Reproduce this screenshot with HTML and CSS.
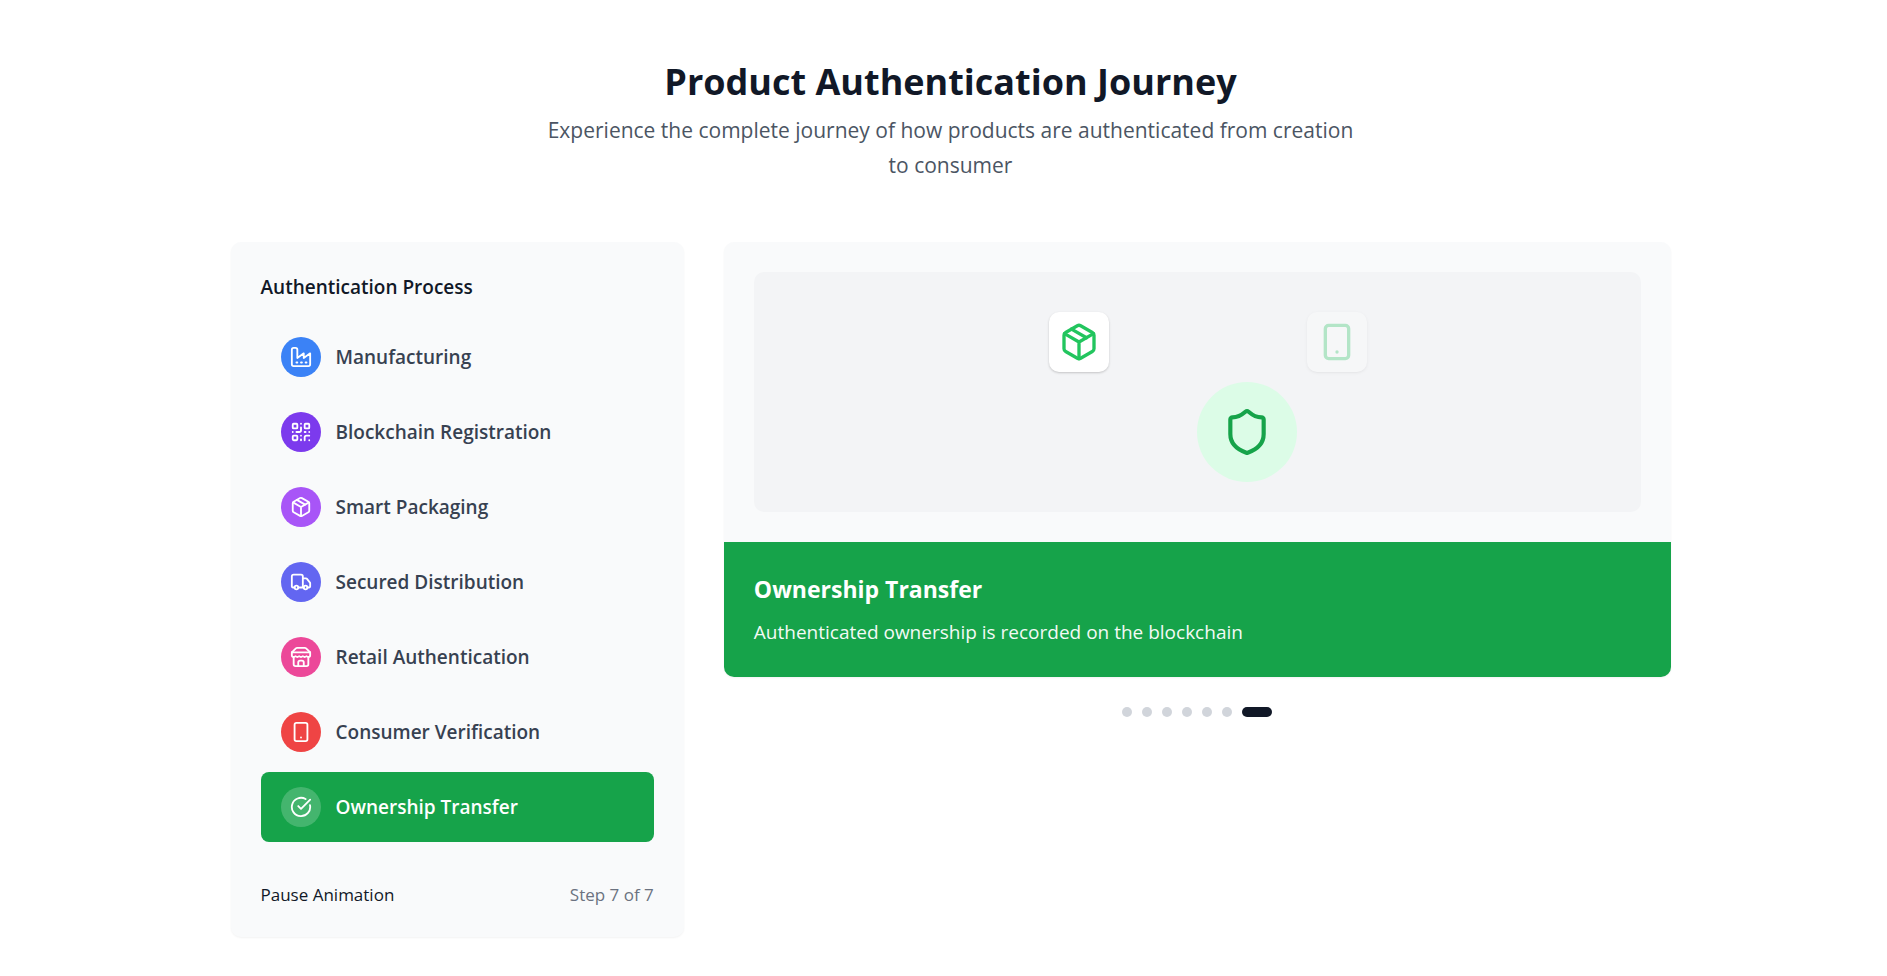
FILE: index.html
```
<!DOCTYPE html>
<html lang="en">
<head>
<meta charset="utf-8">
<title>Product Authentication Journey</title>
<link rel="stylesheet" href="styles.css">
</head>
<body>
<svg class="sprite" aria-hidden="true">
  <symbol id="factory" viewBox="0 0 24 24"><path d="M2 20a2 2 0 0 0 2 2h16a2 2 0 0 0 2-2V8l-7 5V8l-7 5V4a2 2 0 0 0-2-2H4a2 2 0 0 0-2 2Z"/><path d="M17 18h1M12 18h1M7 18h1"/></symbol>
  <symbol id="qr" viewBox="0 0 24 24"><rect width="5" height="5" x="3" y="3" rx="1"/><rect width="5" height="5" x="16" y="3" rx="1"/><rect width="5" height="5" x="3" y="16" rx="1"/><path d="M21 16h-3a2 2 0 0 0-2 2v3M21 21v.01M12 7v3a2 2 0 0 1-2 2H7M3 12h.01M12 3h.01M12 16v.01M16 12h1M21 12v.01M12 21v-1"/></symbol>
  <symbol id="package" viewBox="0 0 24 24"><path d="m7.5 4.27 9 5.15"/><path d="M21 8a2 2 0 0 0-1-1.73l-7-4a2 2 0 0 0-2 0l-7 4A2 2 0 0 0 3 8v8a2 2 0 0 0 1 1.73l7 4a2 2 0 0 0 2 0l7-4A2 2 0 0 0 21 16Z"/><path d="m3.3 7 8.7 5 8.7-5M12 22V12"/></symbol>
  <symbol id="truck" viewBox="0 0 24 24"><path d="M14 18V6a2 2 0 0 0-2-2H4a2 2 0 0 0-2 2v11a1 1 0 0 0 1 1h2M15 18H9M19 18h2a1 1 0 0 0 1-1v-3.65a1 1 0 0 0-.22-.624l-3.48-4.35A1 1 0 0 0 17.52 8H14"/><circle cx="17" cy="18" r="2"/><circle cx="7" cy="18" r="2"/></symbol>
  <symbol id="store" viewBox="0 0 24 24"><path d="m2 7 4.41-4.41A2 2 0 0 1 7.83 2h8.34a2 2 0 0 1 1.42.59L22 7M4 12v8a2 2 0 0 0 2 2h12a2 2 0 0 0 2-2v-8"/><path d="M15 22v-4a2 2 0 0 0-2-2h-2a2 2 0 0 0-2 2v4M2 7h20"/><path d="M22 7v3a2 2 0 0 1-2 2a2.7 2.7 0 0 1-1.59-.63.7.7 0 0 0-.82 0A2.7 2.7 0 0 1 16 12a2.7 2.7 0 0 1-1.59-.63.7.7 0 0 0-.82 0A2.7 2.7 0 0 1 12 12a2.7 2.7 0 0 1-1.59-.63.7.7 0 0 0-.82 0A2.7 2.7 0 0 1 8 12a2.7 2.7 0 0 1-1.59-.63.7.7 0 0 0-.82 0A2.7 2.7 0 0 1 4 12a2 2 0 0 1-2-2V7"/></symbol>
  <symbol id="phone" viewBox="0 0 24 24"><rect width="14" height="20" x="5" y="2" rx="2"/><path d="M12 18h.01"/></symbol>
  <symbol id="check" viewBox="0 0 24 24"><path d="M21.801 10A10 10 0 1 1 17 3.335"/><path d="m9 11 3 3L22 4"/></symbol>
  <symbol id="shield" viewBox="0 0 24 24"><path d="M20 13c0 5-3.5 7.5-7.66 8.95a1 1 0 0 1-.67-.01C7.5 20.5 4 18 4 13V6a1 1 0 0 1 1-1c2 0 4.5-1.2 6.24-2.72a1.17 1.17 0 0 1 1.52 0C14.51 3.81 17 5 19 5a1 1 0 0 1 1 1z"/></symbol>
</svg>

<main class="journey">
  <header class="intro">
    <h1 class="intro-title">Product Authentication Journey</h1>
    <p class="intro-text">Experience the complete journey of how products are authenticated from creation to consumer</p>
  </header>

  <div class="columns">
    <section class="process">
      <h2 class="process-title">Authentication Process</h2>
      <div class="steps">
        <button type="button" class="step"><span class="badge blue"><svg class="icon"><use href="#factory"/></svg></span>Manufacturing</button>
        <button type="button" class="step"><span class="badge violet"><svg class="icon"><use href="#qr"/></svg></span>Blockchain Registration</button>
        <button type="button" class="step"><span class="badge purple"><svg class="icon"><use href="#package"/></svg></span>Smart Packaging</button>
        <button type="button" class="step"><span class="badge indigo"><svg class="icon"><use href="#truck"/></svg></span>Secured Distribution</button>
        <button type="button" class="step"><span class="badge pink"><svg class="icon"><use href="#store"/></svg></span>Retail Authentication</button>
        <button type="button" class="step"><span class="badge red"><svg class="icon"><use href="#phone"/></svg></span>Consumer Verification</button>
        <button type="button" class="step active" aria-current="step"><span class="badge"><svg class="icon"><use href="#check"/></svg></span>Ownership Transfer</button>
      </div>
      <div class="controls">
        <button type="button" class="pause">Pause Animation</button>
        <span class="count">Step 7 of 7</span>
      </div>
    </section>

    <div class="preview">
      <section class="scene">
        <div class="scene-top">
          <div class="stage">
            <div class="tile tile-package"><svg class="icon"><use href="#package"/></svg></div>
            <div class="tile tile-phone"><svg class="icon"><use href="#phone"/></svg></div>
            <div class="seal"><svg class="icon"><use href="#shield"/></svg></div>
          </div>
        </div>
        <div class="caption">
          <h3 class="caption-title">Ownership Transfer</h3>
          <p class="caption-text">Authenticated ownership is recorded on the blockchain</p>
        </div>
      </section>
      <nav class="dots" aria-label="Steps">
        <button type="button" class="dot" aria-label="Step 1"></button>
        <button type="button" class="dot" aria-label="Step 2"></button>
        <button type="button" class="dot" aria-label="Step 3"></button>
        <button type="button" class="dot" aria-label="Step 4"></button>
        <button type="button" class="dot" aria-label="Step 5"></button>
        <button type="button" class="dot" aria-label="Step 6"></button>
        <button type="button" class="dot current" aria-label="Step 7"></button>
      </nav>
    </div>
  </div>
</main>
</body>
</html>
```
FILE: styles.css
```
*, *::before, *::after { box-sizing: border-box; }

body {
  margin: 0;
  background: #fff;
  color: #111827;
  font-family: "Segoe UI", "Open Sans", "Noto Sans", sans-serif;
}

h1, h2, h3, p { margin: 0; }

button {
  border: 0;
  padding: 0;
  background: none;
  color: inherit;
  font: inherit;
  cursor: pointer;
}

.sprite { position: absolute; width: 0; height: 0; }

.icon {
  display: block;
  width: 22px;
  height: 22px;
  fill: none;
  stroke: currentColor;
  stroke-width: 2;
  stroke-linecap: round;
  stroke-linejoin: round;
}

.journey { padding: 59px 0 40px 14px; }

.intro {
  display: flex;
  flex-direction: column;
  align-items: center;
  gap: 9px;
  margin-bottom: 59px;
  text-align: center;
}

.intro-title { font-size: 36px; line-height: 45px; font-weight: 700; }

.intro-text {
  max-width: 820px;
  color: #4b5563;
  font-size: 21px;
  line-height: 35px;
}

.columns {
  display: grid;
  grid-template-columns: repeat(3, minmax(0, 1fr));
  column-gap: 40px;
  align-items: start;
  max-width: 1440px;
  margin: 0 auto;
}

.preview { grid-column: span 2; }

.process {
  padding: 30px;
  border-radius: 10px;
  background: #f9fafb;
  box-shadow: 0 1px 2px rgba(0, 0, 0, 0.05);
}

.process-title {
  margin-bottom: 20px;
  font-size: 19px;
  line-height: 30px;
  font-weight: 600;
}

.steps { display: flex; flex-direction: column; gap: 5px; }

.step {
  display: flex;
  align-items: center;
  gap: 15px;
  padding: 15px 20px;
  border-radius: 8px;
  color: #374151;
  font-size: 19px;
  line-height: 30px;
  font-weight: 600;
  text-align: left;
}

.step.active { background: #16a34a; color: #fff; }

.badge {
  display: grid;
  place-items: center;
  width: 40px;
  height: 40px;
  border-radius: 50%;
  background: rgba(255, 255, 255, 0.2);
  color: #fff;
}

.blue { background: #3b82f6; }
.violet { background: #7c3aed; }
.purple { background: #a855f7; }
.indigo { background: #6366f1; }
.pink { background: #ec4899; }
.red { background: #ef4444; }

.controls {
  display: flex;
  justify-content: space-between;
  margin-top: 40px;
  font-size: 17px;
  line-height: 25px;
}

.count { color: #6b7280; }

.scene {
  overflow: hidden;
  border-radius: 10px;
  background: #f9fafb;
  box-shadow: 0 1px 2px rgba(0, 0, 0, 0.05);
}

.scene-top { padding: 30px; }

.stage {
  position: relative;
  height: 240px;
  border-radius: 10px;
  background: #f3f4f6;
}

.tile {
  position: absolute;
  top: 40px;
  display: grid;
  place-items: center;
  width: 60px;
  height: 60px;
  border-radius: 10px;
  background: #fff;
  color: #22c55e;
  box-shadow: 0 1px 3px rgba(0, 0, 0, 0.1), 0 1px 2px rgba(0, 0, 0, 0.1);
}

.tile .icon { width: 40px; height: 40px; }
.tile-package { left: 295px; }
.tile-phone { left: 553px; opacity: 0.3; }

.seal {
  position: absolute;
  top: 110px;
  left: 50%;
  display: grid;
  place-items: center;
  width: 100px;
  height: 100px;
  border-radius: 50%;
  background: #dcfce7;
  color: #16a34a;
}

.seal .icon { width: 50px; height: 50px; }

.caption { padding: 30px; background: #16a34a; color: #fff; }

.caption-title {
  margin-bottom: 10px;
  font-size: 23px;
  line-height: 35px;
  font-weight: 700;
}

.caption-text { font-size: 19px; line-height: 30px; opacity: 0.95; }

.dots {
  display: flex;
  justify-content: center;
  gap: 10px;
  margin-top: 30px;
}

.dot { width: 10px; height: 10px; border-radius: 5px; background: #d1d5db; }
.dot.current { width: 30px; background: #111827; }
```
